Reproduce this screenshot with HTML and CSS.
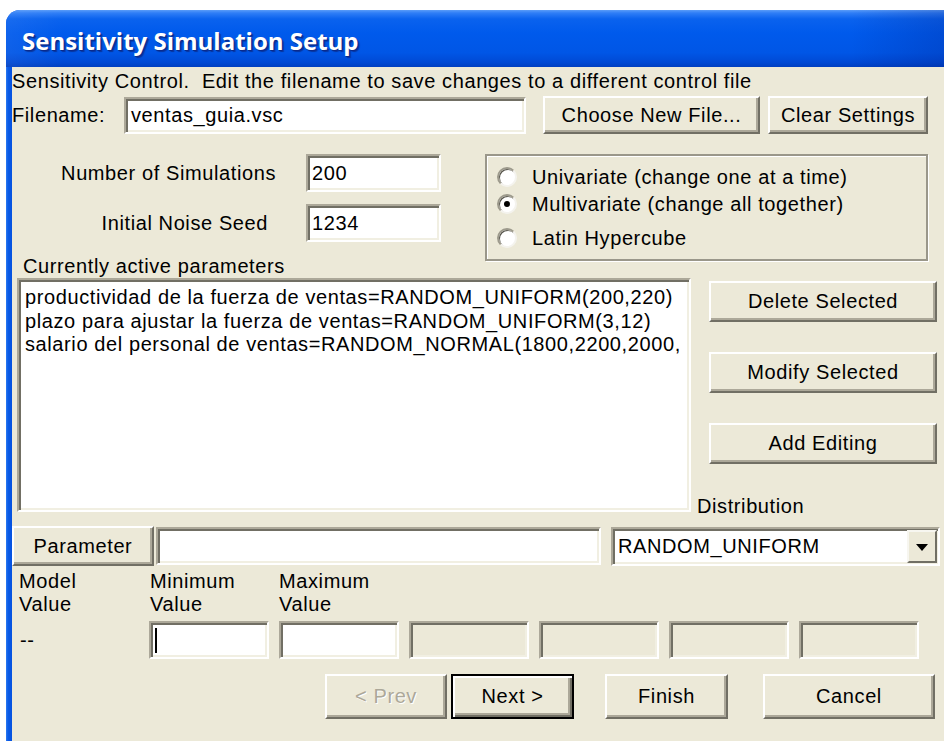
FILE: index.html
```html
<!DOCTYPE html>
<html lang="en">
<head>
<meta charset="utf-8">
<title>Sensitivity Simulation Setup</title>
<link rel="stylesheet" href="styles.css">
</head>
<body>
<div class="window">
  <header class="titlebar">
    <h1 class="title">Sensitivity Simulation Setup</h1>
  </header>
  <div class="frame">
    <main class="client">
      <p class="intro">Sensitivity Control.&nbsp; Edit the filename to save changes to a different control file</p>

      <div class="file-row">
        <span class="file-label">Filename:</span>
        <div class="field file-field">ventas_guia.vsc</div>
        <button class="btn btn-choose">Choose New File...</button>
        <button class="btn btn-clear">Clear Settings</button>
      </div>

      <div class="setup-row">
        <div class="counts">
          <div class="count-row">
            <span class="count-label">Number of Simulations</span>
            <div class="field count-field">200</div>
          </div>
          <div class="count-row">
            <span class="count-label count-label-seed">Initial Noise Seed</span>
            <div class="field count-field">1234</div>
          </div>
          <div class="list-caption">Currently active parameters</div>
        </div>
        <div class="method-group">
          <div class="radio radio-first"><span class="radio-dot"></span>Univariate (change one at a time)</div>
          <div class="radio radio-second"><span class="radio-dot is-checked"></span>Multivariate (change all together)</div>
          <div class="radio radio-third"><span class="radio-dot"></span>Latin Hypercube</div>
        </div>
      </div>

      <div class="list-row">
        <div class="field listbox">
          <div class="list-item">productividad de la fuerza de ventas=RANDOM_UNIFORM(200,220)</div>
          <div class="list-item">plazo para ajustar la fuerza de ventas=RANDOM_UNIFORM(3,12)</div>
          <div class="list-item">salario del personal de ventas=RANDOM_NORMAL(1800,2200,2000,</div>
        </div>
        <div class="side">
          <button class="btn side-btn">Delete Selected</button>
          <button class="btn side-btn">Modify Selected</button>
          <button class="btn side-btn">Add Editing</button>
          <div class="dist-label">Distribution</div>
        </div>
      </div>

      <div class="param-row">
        <button class="btn btn-param">Parameter</button>
        <div class="field param-field"></div>
        <div class="field combo">
          <span class="combo-text">RANDOM_UNIFORM</span>
          <span class="combo-btn">
            <svg class="combo-arrow" width="12" height="7" viewBox="0 0 12 7"><path d="M0 0H12L6 7Z" fill="#000"/></svg>
          </span>
        </div>
      </div>

      <div class="values">
        <div class="col-head col-model">Model<br>Value</div>
        <div class="col-head col-min">Minimum<br>Value</div>
        <div class="col-head col-max">Maximum<br>Value</div>
        <div class="model-value">--</div>
        <div class="field value-field"><span class="caret"></span></div>
        <div class="field value-field"></div>
        <div class="field value-field is-disabled"></div>
        <div class="field value-field is-disabled"></div>
        <div class="field value-field is-disabled"></div>
        <div class="field value-field is-disabled"></div>
      </div>

      <div class="nav-row">
        <button class="btn nav-btn btn-prev" disabled>&lt; Prev</button>
        <button class="btn nav-btn btn-default">Next &gt;</button>
        <button class="btn nav-btn btn-finish">Finish</button>
        <button class="btn nav-btn btn-cancel">Cancel</button>
      </div>
    </main>
  </div>
</div>
</body>
</html>
```

FILE: styles.css
```css
* { box-sizing: border-box; }

html, body {
  margin: 0;
  background: #fff;
  overflow: hidden;
}

body {
  font-family: "Liberation Sans", Arial, sans-serif;
  font-size: 20px;
  letter-spacing: 0.6px;
  color: #000;
}

/* ---- window chrome ---- */
.window {
  margin: 10px 0 0 6px;
  width: 960px;
  height: 731px;
  display: flex;
  flex-direction: column;
  border-radius: 14px 14px 0 0;
  overflow: hidden;
  background: #0a57e4;
}

.titlebar {
  height: 57px;
  flex: none;
  padding-left: 16px;
  display: flex;
  align-items: center;
  background:
    linear-gradient(90deg, rgba(255,255,255,0.06) 0, rgba(0,0,0,0) 6%, rgba(0,0,0,0) 88%, rgba(0,20,120,0.25) 100%),
    linear-gradient(180deg, #5a9cf8 0, #2f7ef6 3px, #0a62ee 9px, #005aec 40%, #0056e6 75%, #0049d4 92%, #003fc0 100%);
}

.title {
  margin: 4px 0 0;
  font-family: "Open Sans", "Liberation Sans", sans-serif;
  font-weight: 700;
  font-size: 24px;
  letter-spacing: 0;
  color: #fff;
  text-shadow: 1px 1px 0 #0b2a8c, 2px 2px 1px rgba(10, 30, 110, 0.6);
}

.frame {
  flex: 1;
  padding-left: 6px;
  background: linear-gradient(90deg, #2e7bf2 0, #0a5ae6 2px, #0552e0 6px);
}

.client {
  height: 100%;
  background: #ece9d8;
  padding-top: 2px;
}

/* ---- shared controls ---- */
.btn {
  font: inherit;
  letter-spacing: inherit;
  color: #000;
  background: #ece9d8;
  border: 2px solid;
  border-color: #fff #716f64 #716f64 #fff;
  box-shadow: inset -2px -2px 0 #aca899;
  padding: 0;
  text-align: center;
}

.btn:disabled {
  color: #aca899;
  text-shadow: 1px 1px 0 #fff;
}

.btn-default {
  border: 2px solid #000;
  box-shadow: inset 2px 2px 0 #fff, inset -2px -2px 0 #716f64, inset -4px -4px 0 #aca899;
}

.field {
  background: #fff;
  border: 2px solid;
  border-color: #aca899 #fff #fff #aca899;
  box-shadow: inset 2px 2px 0 #716f64, inset -2px -2px 0 #f1efe2;
  white-space: nowrap;
  overflow: hidden;
}

/* ---- intro + filename ---- */
.intro {
  margin: 0;
  line-height: 24px;
  height: 24px;
  white-space: nowrap;
}

.file-row {
  margin-top: 3px;
  height: 38px;
  display: flex;
  align-items: center;
}

.file-label { width: 112px; }

.file-field {
  width: 402px;
  height: 37px;
  line-height: 33px;
  padding-left: 5px;
}

.btn-choose {
  margin-left: 17px;
  width: 217px;
  height: 38px;
}

.btn-clear {
  margin-left: 8px;
  width: 160px;
  height: 38px;
}

/* ---- counts + method ---- */
.setup-row {
  margin-top: 20px;
  display: flex;
  align-items: flex-start;
}

.counts { width: 473px; }

.count-row {
  height: 38px;
  display: flex;
  align-items: center;
}

.count-row + .count-row { margin-top: 12px; }

.count-label {
  width: 264px;
  text-align: right;
}

.count-label-seed { padding-right: 8px; }

.count-field {
  margin-left: 30px;
  width: 135px;
  height: 38px;
  line-height: 34px;
  padding-left: 4px;
}

.list-caption {
  margin-top: 13px;
  line-height: 22px;
  padding-left: 11px;
}

.method-group {
  width: 443px;
  height: 107px;
  border: 2px solid #9a978a;
  box-shadow: inset 1px 1px 0 #fff, 1px 1px 0 #fff;
  padding: 8px 0 0 10px;
}

.radio {
  height: 26px;
  display: flex;
  align-items: center;
  white-space: nowrap;
}

.radio-second { margin-top: 1px; }
.radio-third { margin-top: 8px; }

.radio-dot {
  width: 20px;
  height: 20px;
  margin-right: 15px;
  border-radius: 50%;
  background: #fff;
  border: 2px solid;
  border-color: #9d9a8c #f4f3ee #f4f3ee #9d9a8c;
  box-shadow: inset 1px 1px 0 #5a584f;
  display: flex;
  align-items: center;
  justify-content: center;
  flex: none;
}

.radio-dot.is-checked::after {
  content: "";
  width: 6px;
  height: 6px;
  border-radius: 50%;
  background: #000;
}

/* ---- parameter list ---- */
.list-row {
  margin-top: 1px;
  display: flex;
  align-items: flex-start;
}

.listbox {
  margin-left: 5px;
  width: 674px;
  height: 234px;
  padding: 6px 0 0 6px;
}

.list-item {
  line-height: 23.5px;
  white-space: nowrap;
}

.side {
  margin-left: 6px;
  padding-top: 3px;
  display: flex;
  flex-direction: column;
  align-items: flex-start;
}

.side-btn {
  margin-left: 12px;
  width: 228px;
  height: 41px;
}

.side-btn + .side-btn { margin-top: 30px; }

.dist-label {
  margin-top: 31px;
  line-height: 22px;
}

/* ---- parameter editor ---- */
.param-row {
  margin-top: 9px;
  height: 40px;
  display: flex;
  align-items: center;
}

.btn-param {
  width: 142px;
  height: 40px;
}

.param-field {
  margin-left: 2px;
  width: 445px;
  height: 38px;
}

.combo {
  margin-left: 10px;
  width: 329px;
  height: 39px;
  display: flex;
  align-items: center;
  padding-left: 5px;
}

.combo-text { flex: 1; }

.combo-btn {
  width: 30px;
  height: 33px;
  margin-right: 1px;
  background: #ece9d8;
  border: 2px solid;
  border-color: #f7f6f0 #716f64 #716f64 #f7f6f0;
  display: flex;
  align-items: center;
  justify-content: center;
}

.combo-arrow { display: block; margin-top: 2px; }

/* ---- value columns ---- */
.values {
  margin-top: 4px;
  display: grid;
  grid-template-columns: 127px repeat(6, 120px);
  grid-template-rows: 46px 38px;
  column-gap: 10px;
  row-gap: 5px;
}

.col-head {
  line-height: 23px;
  white-space: nowrap;
}

.col-model { padding-left: 7px; }
.col-min { padding-left: 1px; grid-column: 2; }
.col-max { grid-column: 3; }

.model-value {
  grid-row: 2;
  grid-column: 1;
  padding-left: 8px;
  align-self: center;
  line-height: 20px;
}

.value-field {
  grid-row: 2;
  height: 38px;
  position: relative;
}

.value-field.is-disabled { background: #ece9d8; }

.caret {
  position: absolute;
  left: 4px;
  top: 5px;
  width: 2px;
  height: 25px;
  background: #000;
}

/* ---- wizard buttons ---- */
.nav-row {
  margin-top: 15px;
  padding-left: 313px;
  display: flex;
}

.nav-btn { height: 45px; }

.btn-prev { width: 122px; }
.btn-default { margin-left: 4px; width: 123px; }
.btn-finish { margin-left: 31px; width: 123px; }
.btn-cancel { margin-left: 35px; width: 172px; }
```
